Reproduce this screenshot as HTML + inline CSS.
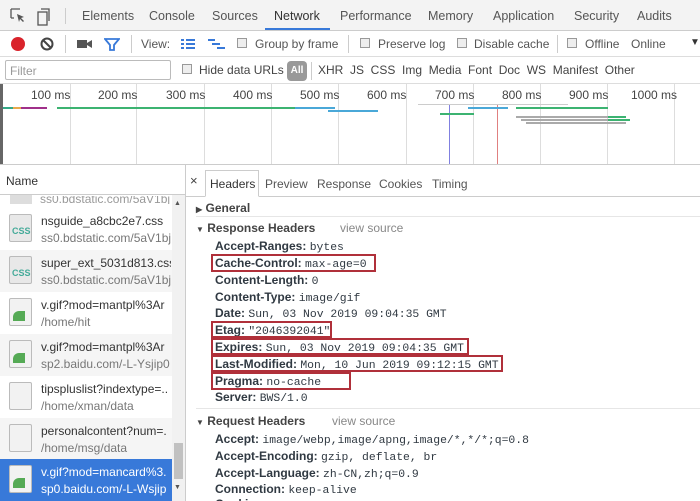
<!DOCTYPE html>
<html><head><meta charset="utf-8"><style>
*{margin:0;padding:0;box-sizing:border-box}
body{width:700px;height:501px;overflow:hidden;background:#fff;font-family:"Liberation Sans",sans-serif;font-size:12px;color:#333;position:relative}
.a{position:absolute;white-space:nowrap}
.mono{font-family:"Liberation Mono",monospace;font-size:11.4px;color:#303942}
.k{font-weight:bold;color:#303942}
.rb{position:absolute;border:2px solid #b0303a}
.g{position:absolute;top:84px;height:80px;width:1px;background:#ddd}
.bar{position:absolute;height:2px}
.row{position:absolute;left:0;width:172px;height:42px;overflow:hidden}
.ic{position:absolute;left:9px;top:6px;width:23px;height:28px;background:#f2f2f2;border:1px solid #bbb;border-radius:2px}
.t1{position:absolute;left:41px;top:6px;font-size:12px;color:#333;width:130px;overflow:hidden}
.t2{position:absolute;left:41px;top:23px;font-size:12px;color:#777;width:130px;overflow:hidden}
</style></head><body>
<div class="a" style="left:0;top:0;width:700px;height:31px;background:#f3f3f3;border-bottom:1px solid #ccc"></div>
<svg class="a" style="left:10px;top:8px" width="40" height="18"><path d="M1 1h9M1 1v9M1 10h3" stroke="#555" fill="none" stroke-width="1.3"/><path d="M7 6l7 3-3 1 3 3-1 1-3-3-1 3z" fill="#555"/><rect x="28" y="4" width="9" height="13" stroke="#555" fill="none" stroke-width="1.3"/><path d="M31 1h8v12" stroke="#555" fill="none" stroke-width="1.3"/></svg>
<div class="a" style="left:65px;top:8px;width:1px;height:16px;background:#ccc"></div>
<div class="a" style="left:82px;top:9px;color:#555;font-size:12.5px">Elements</div>
<div class="a" style="left:149px;top:9px;color:#555;font-size:12.5px">Console</div>
<div class="a" style="left:212px;top:9px;color:#555;font-size:12.5px">Sources</div>
<div class="a" style="left:274px;top:9px;color:#333;font-size:12.5px">Network</div>
<div class="a" style="left:265px;top:28px;width:65px;height:2px;background:#3879d9"></div>
<div class="a" style="left:340px;top:9px;color:#555;font-size:12.5px">Performance</div>
<div class="a" style="left:428px;top:9px;color:#555;font-size:12.5px">Memory</div>
<div class="a" style="left:493px;top:9px;color:#555;font-size:12.5px">Application</div>
<div class="a" style="left:574px;top:9px;color:#555;font-size:12.5px">Security</div>
<div class="a" style="left:637px;top:9px;color:#555;font-size:12.5px">Audits</div>
<div class="a" style="left:0;top:32px;width:700px;height:25px;border-bottom:1px solid #ddd"></div>
<div class="a" style="left:11px;top:37px;width:14px;height:14px;border-radius:50%;background:#d9232b"></div>
<svg class="a" style="left:40px;top:37px" width="14" height="14"><circle cx="7" cy="7" r="5.5" stroke="#444" stroke-width="2" fill="none"/><path d="M3 3l8 8" stroke="#444" stroke-width="2"/></svg>
<div class="a" style="left:65px;top:35px;width:1px;height:18px;background:#ccc"></div>
<svg class="a" style="left:77px;top:39px" width="16" height="10"><rect x="0" y="1" width="10" height="8" fill="#555"/><path d="M10 4l5-3v8l-5-3z" fill="#555"/></svg>
<svg class="a" style="left:104px;top:38px" width="16" height="13"><path d="M1 1h14l-5 6v5h-4v-5z" stroke="#3879d9" stroke-width="1.8" fill="none"/></svg>
<div class="a" style="left:131px;top:35px;width:1px;height:18px;background:#ccc"></div>
<div class="a" style="left:141px;top:37px;color:#555">View:</div>
<svg class="a" style="left:181px;top:38px" width="14" height="12"><rect x="0" y="1" width="3" height="2" fill="#3879d9"/><rect x="5" y="1" width="9" height="2" fill="#3879d9"/><rect x="0" y="5" width="3" height="2" fill="#3879d9"/><rect x="5" y="5" width="9" height="2" fill="#3879d9"/><rect x="0" y="9" width="3" height="2" fill="#3879d9"/><rect x="5" y="9" width="9" height="2" fill="#3879d9"/></svg>
<svg class="a" style="left:208px;top:38px" width="18" height="12"><path d="M0 2h7M4 6h8M9 10h8" stroke="#3879d9" stroke-width="2"/></svg>
<div class="a" style="left:237px;top:38px;width:10px;height:10px;border:1px solid #999;background:#eee"></div>
<div class="a" style="left:255px;top:37px;color:#555">Group by frame</div>
<div class="a" style="left:348px;top:35px;width:1px;height:18px;background:#ccc"></div>
<div class="a" style="left:360px;top:38px;width:10px;height:10px;border:1px solid #999;background:#eee"></div>
<div class="a" style="left:378px;top:37px;color:#555">Preserve log</div>
<div class="a" style="left:457px;top:38px;width:10px;height:10px;border:1px solid #999;background:#eee"></div>
<div class="a" style="left:474px;top:37px;color:#555">Disable cache</div>
<div class="a" style="left:557px;top:35px;width:1px;height:18px;background:#ccc"></div>
<div class="a" style="left:567px;top:38px;width:10px;height:10px;border:1px solid #999;background:#eee"></div>
<div class="a" style="left:585px;top:37px;color:#555">Offline</div>
<div class="a" style="left:631px;top:37px;color:#555">Online</div>
<div class="a" style="left:690px;top:37px;color:#333;font-size:10px">▼</div>
<div class="a" style="left:0;top:57px;width:700px;height:27px;border-bottom:1px solid #ddd"></div>
<div class="a" style="left:5px;top:60px;width:166px;height:20px;border:1px solid #bbb;border-radius:2px;padding:3px 4px;color:#999">Filter</div>
<div class="a" style="left:182px;top:64px;width:10px;height:10px;border:1px solid #999;background:#eee"></div>
<div class="a" style="left:199px;top:63px;color:#444">Hide data URLs</div>
<div class="a" style="left:287px;top:61px;width:20px;height:20px;border-radius:4px;background:#999;color:#fff;font-size:10px;font-weight:bold;text-align:center;line-height:20px">All</div>
<div class="a" style="left:311px;top:62px;width:1px;height:18px;background:#ccc"></div>
<div class="a" style="left:318px;top:63px;color:#444">XHR&nbsp; JS&nbsp; CSS&nbsp; Img&nbsp; Media&nbsp; Font&nbsp; Doc&nbsp; WS&nbsp; Manifest&nbsp; Other</div>
<div class="a" style="left:0;top:84px;width:3px;height:80px;background:#666"></div>
<div class="g" style="left:70px"></div><div class="g" style="left:136px"></div><div class="g" style="left:204px"></div><div class="g" style="left:271px"></div><div class="g" style="left:338px"></div><div class="g" style="left:406px"></div><div class="g" style="left:473px"></div><div class="g" style="left:540px"></div><div class="g" style="left:607px"></div><div class="g" style="left:674px"></div>
<div class="a" style="left:31px;top:88px;color:#444">100 ms</div><div class="a" style="left:98px;top:88px;color:#444">200 ms</div><div class="a" style="left:166px;top:88px;color:#444">300 ms</div><div class="a" style="left:233px;top:88px;color:#444">400 ms</div><div class="a" style="left:300px;top:88px;color:#444">500 ms</div><div class="a" style="left:367px;top:88px;color:#444">600 ms</div><div class="a" style="left:435px;top:88px;color:#444">700 ms</div><div class="a" style="left:502px;top:88px;color:#444">800 ms</div><div class="a" style="left:569px;top:88px;color:#444">900 ms</div><div class="a" style="left:631px;top:88px;color:#444">1000 ms</div>
<div class="bar" style="left:3px;top:107px;width:10px;background:#3a8"></div>
<div class="bar" style="left:13px;top:107px;width:8px;background:#e9a84b"></div>
<div class="bar" style="left:21px;top:107px;width:26px;background:#a0308a"></div>
<div class="bar" style="left:57px;top:107px;width:238px;background:#3cb371"></div>
<div class="bar" style="left:295px;top:107px;width:40px;background:#4aa8d8"></div>
<div class="bar" style="left:328px;top:110px;width:50px;background:#4aa8d8"></div>
<div class="a" style="left:449px;top:104px;width:1px;height:60px;background:#8080e0"></div>
<div class="a" style="left:497px;top:104px;width:1px;height:60px;background:#e08080"></div>
<div class="bar" style="left:418px;top:104px;width:150px;background:#ccc;height:1px"></div>
<div class="bar" style="left:468px;top:107px;width:40px;background:#4aa8d8"></div>
<div class="bar" style="left:516px;top:107px;width:92px;background:#3cb371"></div>
<div class="bar" style="left:440px;top:113px;width:34px;background:#3cb371"></div>
<div class="bar" style="left:516px;top:116px;width:95px;background:#aaa"></div>
<div class="bar" style="left:608px;top:116px;width:18px;background:#3cb371"></div>
<div class="bar" style="left:521px;top:119px;width:105px;background:#aaa"></div>
<div class="bar" style="left:608px;top:119px;width:22px;background:#3cb371"></div>
<div class="bar" style="left:526px;top:122px;width:100px;background:#aaa"></div>
<div class="a" style="left:0;top:164px;width:700px;height:1px;background:#ccc"></div>
<div class="a" style="left:0;top:165px;width:186px;height:30px;border-bottom:1px solid #ccc;background:#fff"></div>
<div class="a" style="left:6px;top:174px;color:#333">Name</div>
<div class="a" style="left:185px;top:165px;width:1px;height:336px;background:#ccc"></div>
<div class="a" style="left:40px;top:196px;font-size:12px;color:#999;height:8px;overflow:hidden;line-height:6px;width:130px">ss0.bdstatic.com/5aV1bj</div>
<div class="a" style="left:10px;top:195px;width:22px;height:9px;background:#ddd"></div>
<div class="row" style="top:208px"><div class="ic" style="background:#e8e8e8"><div style="position:absolute;left:2px;top:11px;font-size:9px;font-weight:bold;color:#4a9">CSS</div></div><div class="t1">nsguide_a8cbc2e7.css</div><div class="t2">ss0.bdstatic.com/5aV1bj</div></div>
<div class="row" style="top:250px;background:#f5f5f5"><div class="ic" style="background:#e8e8e8"><div style="position:absolute;left:2px;top:11px;font-size:9px;font-weight:bold;color:#4a9">CSS</div></div><div class="t1">super_ext_5031d813.css</div><div class="t2">ss0.bdstatic.com/5aV1bj</div></div>
<div class="row" style="top:292px"><div class="ic"><div style="position:absolute;left:3px;top:12px;width:12px;height:10px;background:#5a5;border-radius:6px 0 0 0"></div></div><div class="t1">v.gif?mod=mantpl%3Ar</div><div class="t2">/home/hit</div></div>
<div class="row" style="top:334px;background:#f5f5f5"><div class="ic"><div style="position:absolute;left:3px;top:12px;width:12px;height:10px;background:#5a5;border-radius:6px 0 0 0"></div></div><div class="t1">v.gif?mod=mantpl%3Ar</div><div class="t2">sp2.baidu.com/-L-Ysjip0</div></div>
<div class="row" style="top:376px"><div class="ic"></div><div class="t1">tipspluslist?indextype=..</div><div class="t2">/home/xman/data</div></div>
<div class="row" style="top:418px;background:#f5f5f5"><div class="ic"></div><div class="t1">personalcontent?num=.</div><div class="t2">/home/msg/data</div></div>
<div class="row" style="top:459px;height:42px;background:#3879d9"><div class="ic"><div style="position:absolute;left:3px;top:12px;width:12px;height:10px;background:#5a5;border-radius:6px 0 0 0"></div></div><div class="t1" style="color:#fff">v.gif?mod=mancard%3.</div><div class="t2" style="color:#fff">sp0.baidu.com/-L-Wsjip</div></div>
<div class="a" style="left:172px;top:195px;width:13px;height:306px;background:#f1f1f1"></div>
<div class="a" style="left:174px;top:443px;width:9px;height:36px;background:#c1c1c1"></div>
<div class="a" style="left:174px;top:200px;font-size:7px;color:#555">▲</div>
<div class="a" style="left:174px;top:484px;font-size:7px;color:#555">▼</div>
<div class="a" style="left:186px;top:196px;width:514px;height:1px;background:#ccc"></div>
<div class="a" style="left:190px;top:173px;color:#444;font-size:13px">×</div>
<div class="a" style="left:205px;top:170px;width:54px;height:27px;border:1px solid #ccc;border-bottom:1px solid #fff;background:#fff"></div>
<div class="a" style="left:210px;top:177px;color:#333">Headers</div>
<div class="a" style="left:265px;top:177px;color:#555">Preview</div>
<div class="a" style="left:317px;top:177px;color:#555">Response</div>
<div class="a" style="left:379px;top:177px;color:#555">Cookies</div>
<div class="a" style="left:432px;top:177px;color:#555">Timing</div>
<div class="a" style="left:196px;top:201px;font-weight:bold;color:#444"><span style="font-size:8px">▶</span> General</div>
<div class="a" style="left:196px;top:216px;width:504px;height:1px;background:#e6e6e6"></div>
<div class="a" style="left:196px;top:221px;font-weight:bold;color:#444"><span style="font-size:8px">▼</span> Response Headers</div>
<div class="a" style="left:340px;top:221px;color:#888">view source</div>
<div class="a" style="left:215px;top:239px"><span class="k">Accept-Ranges:</span> <span class="mono">bytes</span></div>
<div class="a" style="left:215px;top:256px"><span class="k">Cache-Control:</span> <span class="mono">max-age=0</span></div>
<div class="a" style="left:215px;top:273px"><span class="k">Content-Length:</span> <span class="mono">0</span></div>
<div class="a" style="left:215px;top:290px"><span class="k">Content-Type:</span> <span class="mono">image/gif</span></div>
<div class="a" style="left:215px;top:306px"><span class="k">Date:</span> <span class="mono">Sun, 03 Nov 2019 09:04:35 GMT</span></div>
<div class="a" style="left:215px;top:323px"><span class="k">Etag:</span> <span class="mono">"2046392041"</span></div>
<div class="a" style="left:215px;top:340px"><span class="k">Expires:</span> <span class="mono">Sun, 03 Nov 2019 09:04:35 GMT</span></div>
<div class="a" style="left:215px;top:357px"><span class="k">Last-Modified:</span> <span class="mono">Mon, 10 Jun 2019 09:12:15 GMT</span></div>
<div class="a" style="left:215px;top:374px"><span class="k">Pragma:</span> <span class="mono">no-cache</span></div>
<div class="a" style="left:215px;top:390px"><span class="k">Server:</span> <span class="mono">BWS/1.0</span></div>
<div class="rb" style="left:211px;top:254px;width:165px;height:18px"></div>
<div class="rb" style="left:211px;top:321px;width:121px;height:17px"></div>
<div class="rb" style="left:211px;top:338px;width:258px;height:17px"></div>
<div class="rb" style="left:211px;top:355px;width:292px;height:17px"></div>
<div class="rb" style="left:211px;top:372px;width:140px;height:18px"></div>
<div class="a" style="left:196px;top:408px;width:504px;height:1px;background:#e6e6e6"></div>
<div class="a" style="left:196px;top:414px;font-weight:bold;color:#444"><span style="font-size:8px">▼</span> Request Headers</div>
<div class="a" style="left:332px;top:414px;color:#888">view source</div>
<div class="a" style="left:215px;top:432px"><span class="k">Accept:</span> <span class="mono">image/webp,image/apng,image/*,*/*;q=0.8</span></div>
<div class="a" style="left:215px;top:449px"><span class="k">Accept-Encoding:</span> <span class="mono">gzip, deflate, br</span></div>
<div class="a" style="left:215px;top:466px"><span class="k">Accept-Language:</span> <span class="mono">zh-CN,zh;q=0.9</span></div>
<div class="a" style="left:215px;top:482px"><span class="k">Connection:</span> <span class="mono">keep-alive</span></div>
<div class="a" style="left:215px;top:497px;height:4px;overflow:hidden"><span class="k">Cookie:</span></div>
</body></html>
